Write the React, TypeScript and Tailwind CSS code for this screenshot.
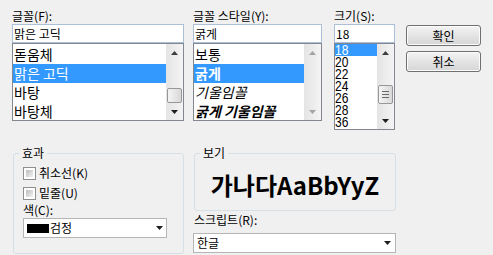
function Up({ dim }: { dim?: boolean }) {
  return (
    <svg width="7" height="4" viewBox="0 0 7 4">
      <polygon points="0,4 3.5,0 7,4" fill={dim ? "#a3a3a3" : "#3c3c3c"} />
    </svg>
  );
}

function Down({ dim }: { dim?: boolean }) {
  return (
    <svg width="7" height="4" viewBox="0 0 7 4">
      <polygon points="0,0 7,0 3.5,4" fill={dim ? "#a3a3a3" : "#1e1e1e"} />
    </svg>
  );
}

// 세로 스크롤바 — thumb 위치는 클래스 문자열로 받는다
function ScrollBar({ thumb, dim, grip }: { thumb?: string; dim?: boolean; grip?: boolean }) {
  return (
    <div className="flex h-full w-[17px] shrink-0 flex-col bg-linear-to-r from-[#e4e4e4] to-[#f4f4f4]">
      <div className="flex h-[17px] items-center justify-center">
        <Up dim={dim} />
      </div>
      <div className="flex-1">
        {thumb && (
          <div
            className={`mx-[1px] flex flex-col items-center justify-center gap-[2px] rounded-[2px] border border-[#979797] bg-linear-to-r from-[#f4f4f4] to-[#d9d9d9] ${thumb}`}
          >
            {grip && (
              <>
                <div className="h-px w-[7px] bg-[#6b6b6b]" />
                <div className="h-px w-[7px] bg-[#6b6b6b]" />
                <div className="h-px w-[7px] bg-[#6b6b6b]" />
              </>
            )}
          </div>
        )}
      </div>
      <div className="flex h-[17px] items-center justify-center">
        <Down dim={dim} />
      </div>
    </div>
  );
}

function TextBox({ value }: { value: string }) {
  return (
    <div className="h-[19px] border border-[#abc0d8] bg-white pl-[1px] leading-[17px]">{value}</div>
  );
}

function Button({ label }: { label: string }) {
  return (
    <div className="flex h-[21px] w-[75px] items-center justify-center rounded-[3px] border border-[#707070] bg-linear-to-b from-[#f3f3f3] to-[#d6d6d6] leading-[14px] shadow-[inset_0_0_0_1px_#fbfbfb]">
      {label}
    </div>
  );
}

function Check({ label }: { label: string }) {
  return (
    <div className="flex h-[20px] items-center">
      <div className="ml-[9px] h-[13px] w-[13px] border border-[#8e8f8f] bg-white p-[2px]">
        <div className="h-full w-full bg-linear-to-br from-[#bdbdbd] to-[#f2f2f2]" />
      </div>
      <span className="ml-[3px] leading-[14px]">{label}</span>
    </div>
  );
}

const fonts = [
  { name: "돋움체" },
  { name: "맑은 고딕", sel: true },
  { name: "바탕" },
  { name: "바탕체" },
];

const styles = [
  { name: "보통", cls: "" },
  { name: "굵게", cls: "font-bold", sel: true },
  { name: "기울임꼴", cls: "italic" },
  { name: "굵게 기울임꼴", cls: "font-bold italic" },
];

const sizes = ["18", "20", "22", "24", "26", "28", "36"];

export default function App() {
  return (
    <div className="h-[255px] w-[493px] overflow-hidden bg-[#f0f0f0] pl-[12px] pt-[7px] font-['Noto_Sans_CJK_KR',sans-serif] text-[12px] text-black">
      <div className="flex items-start">
        {/* 글꼴 */}
        <div className="w-[172px]">
          <div className="h-[17px] leading-[17px]">글꼴(F):</div>
          <TextBox value="맑은 고딕" />
          <div className="flex h-[78px] border border-[#828790] bg-white">
            <div className="flex-1 overflow-hidden pt-[1px]">
              {fonts.map((f) => (
                <div
                  key={f.name}
                  className={`h-[19px] pl-[1px] text-[14px] leading-[19px] ${f.sel ? "bg-[#3399ff] text-white" : ""}`}
                >
                  {f.name}
                </div>
              ))}
            </div>
            <ScrollBar thumb="mt-[27px] h-[15px]" />
          </div>
        </div>

        {/* 글꼴 스타일 */}
        <div className="ml-[9px] w-[129px]">
          <div className="h-[17px] leading-[17px]">글꼴 스타일(Y):</div>
          <TextBox value="굵게" />
          <div className="flex h-[78px] border border-[#828790] bg-white">
            <div className="flex-1 overflow-hidden pt-[1px]">
              {styles.map((s) => (
                <div
                  key={s.name}
                  className={`h-[19px] pl-[1px] text-[14px] leading-[19px] ${s.cls} ${s.sel ? "bg-[#3399ff] text-white" : ""}`}
                >
                  {s.name}
                </div>
              ))}
            </div>
            <ScrollBar dim />
          </div>
        </div>

        {/* 크기 */}
        <div className="ml-[12px] w-[61px]">
          <div className="h-[17px] leading-[17px]">크기(S):</div>
          <TextBox value="18" />
          <div className="flex h-[87px] border border-[#828790] bg-white">
            <div className="flex-1 overflow-hidden">
              {sizes.map((n, i) => (
                <div
                  key={n}
                  className={`flex h-[12px] items-center font-['Liberation_Sans',sans-serif] text-[12px] leading-[12px] ${i === 0 ? "bg-[#3399ff] text-white" : ""}`}
                >
                  <span className="inline-block scale-y-[1.25]">{n}</span>
                </div>
              ))}
            </div>
            <ScrollBar thumb="mt-[24px] h-[19px]" grip />
          </div>
        </div>

        {/* 버튼 */}
        <div className="ml-[11px] mt-[18px] flex flex-col gap-[5px]">
          <Button label="확인" />
          <Button label="취소" />
        </div>
      </div>

      <div className="mt-[16px] flex items-start">
        {/* 효과 */}
        <fieldset className="ml-[1px] h-[108px] w-[171px] rounded-[3px] border border-[#d5dfe5]">
          <legend className="ml-[5px] px-[3px] leading-[14px]">효과</legend>
          <div className="pt-[3px]">
            <Check label="취소선(K)" />
            <Check label="밑줄(U)" />
            <div className="ml-[9px] h-[14px] leading-[14px]">색(C):</div>
            <div className="ml-[9px] mt-[1px] flex h-[20px] w-[144px] items-center border border-[#b5b5b5] bg-white">
              <div className="ml-[3px] h-[9px] w-[22px] bg-black" />
              <span className="ml-[1px] leading-[14px]">검정</span>
              <div className="ml-auto mr-[3px] flex">
                <Down />
              </div>
            </div>
          </div>
        </fieldset>

        {/* 보기 + 스크립트 */}
        <div className="ml-[9px] w-[203px]">
          <fieldset className="ml-[1px] h-[65px] w-[202px] rounded-[3px] border border-[#d5dfe5]">
            <legend className="ml-[5px] px-[3px] leading-[14px]">보기</legend>
            <div className="flex h-[49px] items-center justify-center text-[24px] font-bold leading-[28px]">
              가나다AaBbYyZ
            </div>
          </fieldset>
          <div className="mt-[2px] pl-[1px] leading-[14px]">스크립트(R):</div>
          <div className="mt-[6px] flex h-[20px] items-center border border-[#b5b5b5] bg-white">
            <span className="pl-[3px] leading-[14px]">한글</span>
            <div className="ml-auto mr-[4px] flex">
              <Down />
            </div>
          </div>
        </div>
      </div>
    </div>
  );
}
